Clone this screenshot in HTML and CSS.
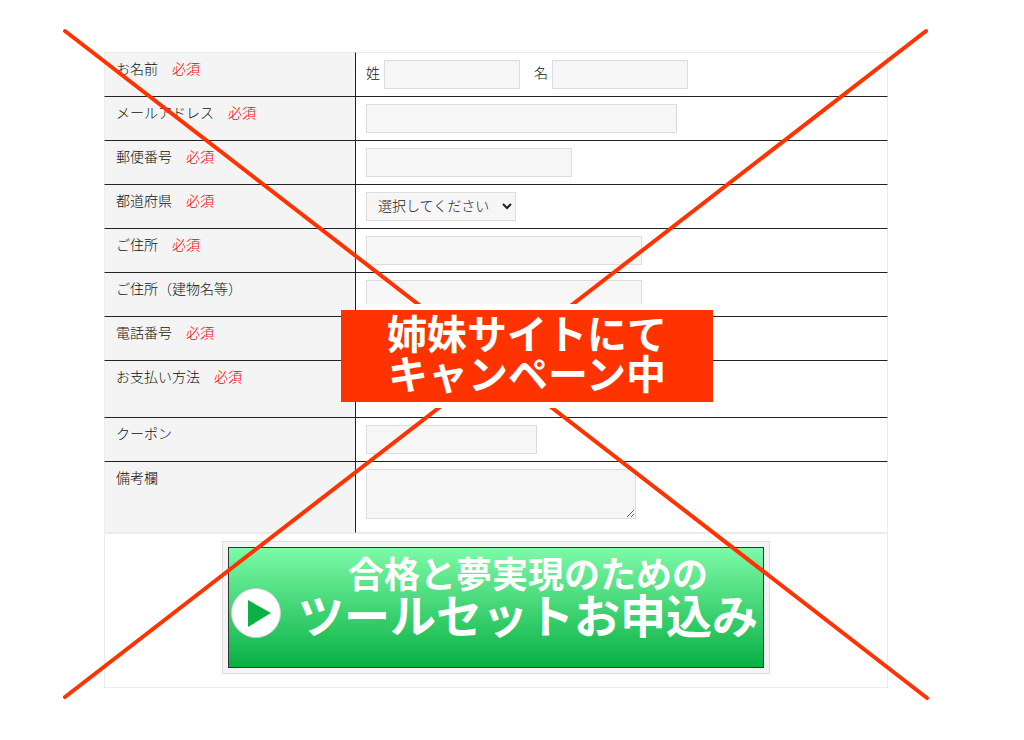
FILE: index.html
```html
<!DOCTYPE html>
<html lang="ja">
<head>
    <meta charset="UTF-8">
    <meta name="viewport" content="width=device-width, initial-scale=1.0">
    <title>ツールセットお申込み</title>
    <link rel="stylesheet" href="styles.css">
</head>
<body>
    <div class="page">
        <form class="order-form" action="#" method="POST">
            <table class="form-table">
                <tr>
                    <th>お名前<span class="required">必須</span></th>
                    <td>
                        <div class="name-fields">
                            <label for="sei">姓</label>
                            <input type="text" name="sei" id="sei" class="field-name">
                            <label for="mei" class="label-mei">名</label>
                            <input type="text" name="mei" id="mei" class="field-name">
                        </div>
                    </td>
                </tr>
                <tr>
                    <th><label for="email">メールアドレス</label><span class="required">必須</span></th>
                    <td><input type="email" name="email" id="email" class="field-email"></td>
                </tr>
                <tr>
                    <th><label for="zip">郵便番号</label><span class="required">必須</span></th>
                    <td><input type="text" name="zip" id="zip" class="field-short"></td>
                </tr>
                <tr>
                    <th><label for="pref">都道府県</label><span class="required">必須</span></th>
                    <td>
                        <select name="pref" id="pref">
                            <option value="">選択してください</option>
                        </select>
                    </td>
                </tr>
                <tr>
                    <th><label for="address">ご住所</label><span class="required">必須</span></th>
                    <td><input type="text" name="address" id="address" class="field-address"></td>
                </tr>
                <tr>
                    <th><label for="building">ご住所（建物名等）</label></th>
                    <td><input type="text" name="building" id="building" class="field-address"></td>
                </tr>
                <tr>
                    <th><label for="tel">電話番号</label><span class="required">必須</span></th>
                    <td><input type="tel" name="tel" id="tel" class="field-short"></td>
                </tr>
                <tr class="row-payment">
                    <th>お支払い方法<span class="required">必須</span></th>
                    <td></td>
                </tr>
                <tr>
                    <th><label for="coupon">クーポン</label></th>
                    <td><input type="text" name="coupon" id="coupon" class="field-coupon"></td>
                </tr>
                <tr class="row-notes">
                    <th><label for="notes">備考欄</label></th>
                    <td><textarea name="notes" id="notes"></textarea></td>
                </tr>
            </table>

            <div class="submit-area">
                <button type="submit" class="submit-frame">
                    <span class="submit-inner">
                        <svg class="play-icon" viewBox="0 0 50 50" aria-hidden="true">
                            <circle cx="25" cy="25" r="24.5" fill="#fff" stroke="#ccc"/>
                            <path d="M17 12 L40 25 L17 39 Z" fill="#0ab245"/>
                        </svg>
                        <span class="submit-text">
                            <span class="submit-lead">合格と夢実現のための</span>
                            <span class="submit-main">ツールセットお申込み</span>
                        </span>
                    </span>
                </button>
            </div>
        </form>

        <!-- closed form: cross and notice over the fields -->
        <svg class="cross" viewBox="0 0 1024 740" preserveAspectRatio="none" aria-hidden="true">
            <path d="M65 31 L927 698 M926 31 L65 697" fill="none" stroke="#ff3300" stroke-width="4" stroke-linecap="round"/>
            <rect x="358" y="304" width="354" height="104" fill="#fff"/>
        </svg>
        <div class="notice">姉妹サイトにて<br>キャンペーン中</div>
    </div>
</body>
</html>
```
FILE: styles.css
```css
* {
    box-sizing: border-box;
}
body {
    margin: 0;
    background: #fff;
    color: #111;
    font-family: "Noto Sans CJK JP", sans-serif;
    font-size: 14px;
    font-weight: 300;
    line-height: 16px;
}
.page {
    position: relative;
    padding: 52px 136px 52px 104px;
}
.form-table {
    width: 100%;
    border-collapse: separate;
    border-spacing: 0;
}
th, td {
    height: 44px;
    padding: 7px 10px;
    border-bottom: 1px solid #222;
    text-align: left;
    vertical-align: top;
}
th {
    width: 252px;
    padding-left: 11px;
    background: #f4f4f4;
    border-left: 1px solid #ebebeb;
    border-right: 1px solid #222;
    font-weight: 300;
}
td {
    border-right: 1px solid #ebebeb;
}
tr:first-child th,
tr:first-child td {
    height: 45px;
    border-top: 1px solid #ebebeb;
}
tr:last-child th,
tr:last-child td {
    border-bottom-color: #ebebeb;
}
.row-payment th {
    height: 57px;
}
.row-notes th {
    height: 71px;
}
.required {
    margin-left: 14px;
    color: #f00;
}
.name-fields {
    display: flex;
    gap: 4px;
}
.name-fields label {
    padding-top: 4px;
}
.label-mei {
    margin-left: 10px;
}
input, select, textarea {
    display: block;
    height: 29px;
    margin: 0;
    padding: 4px 8px;
    border: 1px solid #ddd;
    border-radius: 0;
    background: #f6f6f6;
    color: #222;
    font: inherit;
}
.field-name {
    width: 136px;
}
.field-email {
    width: 311px;
}
.field-short {
    width: 206px;
}
.field-address {
    width: 276px;
}
.field-coupon {
    width: 171px;
}
select {
    width: 150px;
    padding: 0 0 3px 7px;
}
textarea {
    width: 270px;
    height: 50px;
}
.submit-area {
    padding: 7px 0 13px;
    border: 1px solid #ebebeb;
    text-align: center;
}
.submit-frame {
    display: block;
    width: 548px;
    max-width: 100%;
    margin: 0 auto;
    padding: 5px;
    border: 1px solid #ddd;
    background: #f4f4f4;
    font: inherit;
    cursor: pointer;
}
.submit-inner {
    display: flex;
    align-items: center;
    gap: 14px;
    height: 121px;
    padding: 0 2px;
    border: 1px solid #333;
    background: linear-gradient(#7dfaa8, #08b043);
}
.play-icon {
    flex: none;
    width: 50px;
    height: 50px;
    margin-top: 10px;
}
.submit-text {
    flex: 1;
    padding-bottom: 26px;
    color: #fff;
    font-weight: 700;
    white-space: nowrap;
}
.submit-lead, .submit-main {
    display: block;
}
.submit-lead {
    font-size: 36px;
    line-height: 36px;
}
.submit-main {
    font-size: 46px;
    line-height: 46px;
}
.cross {
    position: absolute;
    top: 0;
    left: 0;
    width: 100%;
    height: 100%;
    pointer-events: none;
}
.notice {
    position: absolute;
    top: 310px;
    left: 341px;
    width: 372px;
    height: 92px;
    padding-top: 2px;
    background: #ff3300;
    color: #fff;
    font-size: 40px;
    font-weight: 700;
    line-height: 40px;
    text-align: center;
    white-space: nowrap;
}
```
